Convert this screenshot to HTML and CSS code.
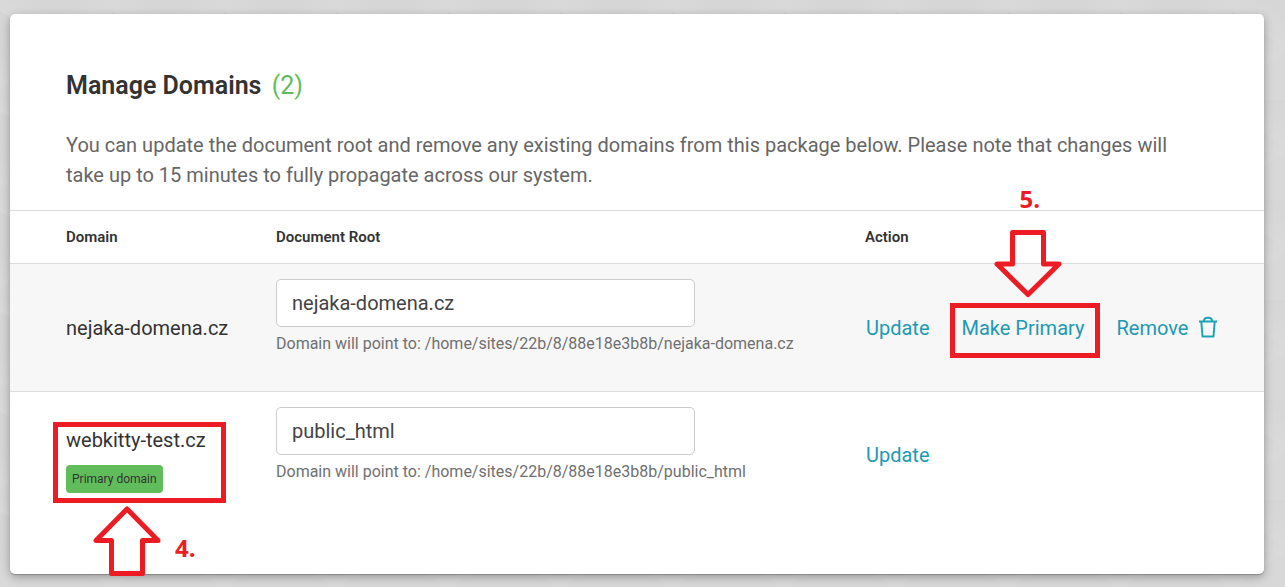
FILE: index.html
```html
<!DOCTYPE html>
<html lang="en">
<head>
<meta charset="utf-8">
<title>Manage Domains</title>
<link rel="stylesheet" href="styles.css">
</head>
<body>
<main class="card">
  <header class="intro">
    <h1 class="title">Manage Domains <span class="count">(2)</span></h1>
    <p class="lead">You can update the document root and remove any existing domains from this package below. Please note that changes will take up to 15 minutes to fully propagate across our system.</p>
  </header>
  <table class="domains">
    <thead>
      <tr>
        <th class="col-domain" scope="col">Domain</th>
        <th class="col-root" scope="col">Document Root</th>
        <th class="col-action" scope="col">Action</th>
      </tr>
    </thead>
    <tbody>
      <tr>
        <td class="col-domain">nejaka-domena.cz</td>
        <td class="col-root">
          <input class="field" type="text" value="nejaka-domena.cz" aria-label="Document root for nejaka-domena.cz" aria-describedby="help-1">
          <div class="help" id="help-1">Domain will point to: /home/sites/22b/8/88e18e3b8b/nejaka-domena.cz</div>
        </td>
        <td class="col-action">
          <div class="actions">
            <a href="#">Update</a>
            <span class="marked">
              <a href="#">Make Primary</a>
              <span class="frame frame-action"></span>
              <svg class="arrow arrow-down" width="70" height="68" viewBox="0 0 70 68" aria-hidden="true"><path d="M19.500 2.500H50.500V34H66L35 64.500L4 34H19.500Z"/></svg>
              <span class="step step-five">5.</span>
            </span>
            <a class="remove" href="#">Remove
              <svg class="trash" width="20" height="24" viewBox="0 0 20 24" aria-hidden="true"><path d="M1 5.500H19M3.300 5.500L4.500 20.500H15.500L16.700 5.500M6 5C6 .8 14 .8 14 5"/></svg>
            </a>
          </div>
        </td>
      </tr>
      <tr>
        <td class="col-domain">
          <div class="marked domain-stack">
            <span>webkitty-test.cz</span>
            <span class="badge">Primary domain</span>
            <span class="frame frame-domain"></span>
            <svg class="arrow arrow-up" width="70" height="72" viewBox="0 0 70 72" aria-hidden="true"><path d="M19.500 68.500H50.500V35.500H66L35 4L4 35.500H19.500Z"/></svg>
            <span class="step step-four">4.</span>
          </div>
        </td>
        <td class="col-root">
          <input class="field" type="text" value="public_html" aria-label="Document root for webkitty-test.cz" aria-describedby="help-2">
          <div class="help" id="help-2">Domain will point to: /home/sites/22b/8/88e18e3b8b/public_html</div>
        </td>
        <td class="col-action">
          <div class="actions"><a href="#">Update</a></div>
        </td>
      </tr>
    </tbody>
  </table>
</main>
</body>
</html>
```

FILE: styles.css
```css
* { box-sizing: border-box; }

body {
  margin: 0;
  padding: 14px 21px 13px 10px;
  background-color: #d8d8d8;
  background-image:
    linear-gradient(35deg, transparent 50%, #dadada 50%, #d6d6d6 70%, transparent 70%),
    linear-gradient(145deg, #d6d6d6 30%, #dadada 50%, transparent 50%);
  background-size: 112px 100px;
  color: #333;
  font: 20px/30px Roboto, "Liberation Sans", sans-serif;
}

.card {
  padding-bottom: 57px;
  background: #fff;
  border-radius: 5px;
  box-shadow: 0 1px 1px rgba(0, 0, 0, .2), 0 3px 10px rgba(0, 0, 0, .3);
}

.intro { padding: 57px 56px 20px; }

.title {
  margin: 0 0 29px;
  font-size: 25px;
  line-height: 30px;
  font-weight: 600;
}

.count {
  margin-left: 4px;
  color: #61bd5b;
  font-weight: 400;
}

.lead { margin: 0; color: #666; }

.domains {
  width: 100%;
  border-collapse: separate;
  border-spacing: 0;
  table-layout: fixed;
}

th {
  height: 54px;
  padding: 0;
  border: solid #ddd;
  border-width: 1px 0;
  font-size: 15px;
  line-height: 20px;
  font-weight: 600;
  text-align: left;
}

td { padding: 0; vertical-align: middle; }

tbody tr:first-child td {
  background: #f7f7f7;
  border-bottom: 1px solid #ddd;
}

.col-domain { width: 266px; padding-left: 56px; }
.col-root { width: 589px; }
td.col-root { padding: 15px 0 35px; }
tbody tr:last-child .col-root { padding-bottom: 33px; }
td.col-action { padding-left: 1px; }

.field {
  display: block;
  width: 419px;
  height: 48px;
  padding: 0 15px;
  border: 1px solid #ccc;
  border-radius: 5px;
  background: #fff;
  color: #444;
  font: inherit;
}

.help {
  margin-top: 5px;
  color: #707070;
  font-size: 16px;
  line-height: 24px;
}

.actions { display: flex; gap: 32px; white-space: nowrap; }

a { color: #2099b2; text-decoration: none; }

.remove { display: flex; align-items: center; gap: 10px; }

.trash, .arrow { fill: none; stroke-linejoin: round; }
.trash { stroke: #1fa3b8; stroke-width: 2; }

.marked { position: relative; }

.domain-stack {
  display: flex;
  flex-direction: column;
  align-items: flex-start;
  gap: 10px;
  padding-top: 8px;
}

.badge {
  padding: 0 6px;
  border-radius: 4px;
  background: #61bd5b;
  font-size: 12px;
  line-height: 28px;
}

/* Tutorial markers laid over the table */
.frame, .arrow, .step { position: absolute; pointer-events: none; }
.frame { border: 5px solid #ed1c24; }
.frame-action { inset: -10px -16px -15px -12px; }
.frame-domain { top: 5px; left: -13px; width: 173px; height: 81px; }
.arrow { stroke: #ed1c24; stroke-width: 5; }
.arrow-down { top: -83px; left: 31px; }
.arrow-up { top: 88px; left: 26px; }
.step {
  color: #ed1c24;
  font: 700 24px/20px "Open Sans", sans-serif;
}
.step-five { top: -124px; left: 58px; }
.step-four { top: 121px; left: 109px; }
```
